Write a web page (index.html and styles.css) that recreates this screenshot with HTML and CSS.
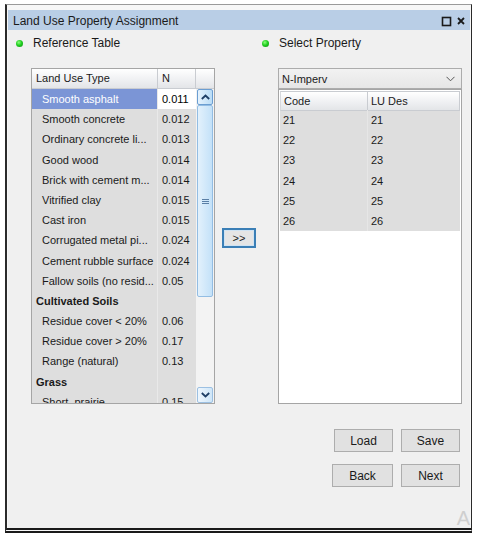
FILE: index.html
```html
<!DOCTYPE html>
<html>
<head>
<meta charset="utf-8">
<link rel="stylesheet" href="styles.css">
</head>
<body>
<div class="window">
  <div class="titlebar">
    <span class="title">Land Use Property Assignment</span>
    <span class="ctrls">
      <svg width="28" height="12" viewBox="0 0 28 12">
        <rect x="1.5" y="2.5" width="8" height="8" fill="none" stroke="#1a1a1a" stroke-width="1.6"/>
        <path d="M17 3 L23 9 M23 3 L17 9" stroke="#1a1a1a" stroke-width="1.8"/>
      </svg>
    </span>
  </div>
  <div class="content">
    <div class="labels">
      <div class="label label-left"><span class="dot"></span>Reference Table</div>
      <div class="label"><span class="dot"></span>Select Property</div>
    </div>
    <div class="panels">
      <div class="ref-table">
        <div class="ref-head">
          <div class="hc hc-name">Land Use Type</div>
          <div class="hc hc-n">N</div>
          <div class="hc hc-sb"></div>
        </div>
        <div class="ref-body">
          <div class="rows">
            <div class="row selected"><div class="c-name">Smooth asphalt</div><div class="c-n">0.011</div></div>
            <div class="row"><div class="c-name">Smooth concrete</div><div class="c-n">0.012</div></div>
            <div class="row"><div class="c-name">Ordinary concrete li...</div><div class="c-n">0.013</div></div>
            <div class="row"><div class="c-name">Good wood</div><div class="c-n">0.014</div></div>
            <div class="row"><div class="c-name">Brick with cement m...</div><div class="c-n">0.014</div></div>
            <div class="row"><div class="c-name">Vitrified clay</div><div class="c-n">0.015</div></div>
            <div class="row"><div class="c-name">Cast iron</div><div class="c-n">0.015</div></div>
            <div class="row"><div class="c-name">Corrugated metal pi...</div><div class="c-n">0.024</div></div>
            <div class="row"><div class="c-name">Cement rubble surface</div><div class="c-n">0.024</div></div>
            <div class="row"><div class="c-name">Fallow soils (no resid...</div><div class="c-n">0.05</div></div>
            <div class="row group"><div class="c-name">Cultivated Soils</div><div class="c-n"></div></div>
            <div class="row"><div class="c-name">Residue cover &lt; 20%</div><div class="c-n">0.06</div></div>
            <div class="row"><div class="c-name">Residue cover &gt; 20%</div><div class="c-n">0.17</div></div>
            <div class="row"><div class="c-name">Range (natural)</div><div class="c-n">0.13</div></div>
            <div class="row group"><div class="c-name">Grass</div><div class="c-n"></div></div>
            <div class="row"><div class="c-name">Short, prairie</div><div class="c-n">0.15</div></div>
          </div>
          <div class="scrollbar">
            <div class="sb-btn sb-up">
              <svg width="9" height="6" viewBox="0 0 9 6"><path d="M0.8 5 L4.5 1.5 L8.2 5" fill="none" stroke="#1f3f66" stroke-width="1.8"/></svg>
            </div>
            <div class="sb-thumb">
              <svg width="7" height="5" viewBox="0 0 7 5"><path d="M0 0.5 H7 M0 2.5 H7 M0 4.5 H7" stroke="#5a7fa6" stroke-width="1"/></svg>
            </div>
            <div class="sb-track"></div>
            <div class="sb-btn sb-down">
              <svg width="9" height="6" viewBox="0 0 9 6"><path d="M0.8 1 L4.5 4.5 L8.2 1" fill="none" stroke="#1f3f66" stroke-width="1.8"/></svg>
            </div>
          </div>
        </div>
      </div>
      <div class="mid">
        <button class="move">&gt;&gt;</button>
      </div>
      <div class="right">
        <div class="select">
          <span>N-Imperv</span>
          <svg width="9" height="6" viewBox="0 0 9 6"><path d="M0.5 0.8 L4.5 4.8 L8.5 0.8" fill="none" stroke="#555" stroke-width="1"/></svg>
        </div>
        <div class="prop-table">
          <div class="prop-head">
            <div class="ph">Code</div>
            <div class="ph">LU Des</div>
          </div>
          <div class="prow"><div>21</div><div>21</div></div>
          <div class="prow"><div>22</div><div>22</div></div>
          <div class="prow"><div>23</div><div>23</div></div>
          <div class="prow"><div>24</div><div>24</div></div>
          <div class="prow"><div>25</div><div>25</div></div>
          <div class="prow"><div>26</div><div>26</div></div>
        </div>
      </div>
    </div>
    <div class="actions">
      <div class="btn-row">
        <button class="btn">Load</button>
        <button class="btn">Save</button>
      </div>
      <div class="btn-row">
        <button class="btn btn-wide">Back</button>
        <button class="btn">Next</button>
      </div>
    </div>
    <span class="watermark">A</span>
  </div>
</div>
</body>
</html>
```

FILE: styles.css
```css
* { box-sizing: border-box; }

body {
  margin: 0;
  background: #ffffff;
  font-family: "Liberation Sans", Arial, sans-serif;
  color: #1a1a1a;
}

.window {
  margin: 4px 0 0 5px;
  width: 467px;
  background: #f7f7f7;
  border-top: 1px solid #9a9a9a;
  border-left: 2px solid #2a2a2a;
  border-right: 1px solid #2a2a2a;
  border-bottom: 5px double #1a1a1a;
  padding: 5px 1px 0 1px;
}

.titlebar {
  height: 20px;
  background: #b9cee6;
  display: flex;
  align-items: center;
  justify-content: space-between;
  padding: 1px 1px 0 5px;
}

.title {
  font-size: 12px;
  color: #1a1a1a;
}

.ctrls svg { display: block; }

.content {
  position: relative;
  height: 498px;
  background: #f0f0f0;
}

.labels {
  display: flex;
  padding: 5px 0 0 8px;
  height: 21px;
}

.label {
  display: flex;
  align-items: center;
  font-size: 12px;
  line-height: 16px;
  color: #1a1a1a;
}

.label-left { width: 246px; }

.dot {
  width: 7px;
  height: 7px;
  border-radius: 50%;
  background: radial-gradient(circle at 40% 35%, #8cff7a 0%, #22d022 45%, #0b8a0b 100%);
  margin-right: 10px;
}

.panels {
  display: flex;
  margin-top: 17px;
  padding-left: 23px;
}

/* Reference table */
.ref-table {
  width: 184px;
  height: 336px;
  border: 1px solid #a5a5a5;
  background: #ffffff;
  font-size: 11px;
  overflow: hidden;
}

.ref-head {
  display: flex;
  height: 20px;
}

.hc {
  height: 20px;
  line-height: 19px;
  background: linear-gradient(#ffffff, #f1f2f4 50%, #e3e5e8);
  border-right: 1px solid #c9ccd1;
  border-bottom: 1px solid #c9ccd1;
  padding-left: 4px;
  color: #1a1a1a;
}

.hc-name { width: 126px; }
.hc-n { width: 38px; }
.hc-sb { width: 18px; border-right: none; }

.ref-body {
  display: flex;
  height: 314px;
}

.rows {
  width: 164px;
  overflow: hidden;
}

.row {
  display: grid;
  grid-template-columns: 126px 38px;
  height: 20.2px;
  line-height: 20px;
  white-space: nowrap;
}

.c-name, .c-n {
  background: #dedede;
  overflow: hidden;
}

.c-name {
  padding-left: 10px;
  border-right: 1px solid #e9e9e9;
}

.c-n { padding-left: 4px; }

.row.group .c-name {
  padding-left: 4px;
  font-weight: bold;
}

.row.selected .c-name {
  background: #7b95d6;
  color: #ffffff;
}

.row.selected .c-n {
  background: #ffffff;
  color: #000000;
}

.scrollbar {
  width: 18px;
  display: flex;
  flex-direction: column;
  padding: 0 1px;
  background: #f3f3f3;
}

.sb-btn {
  height: 16px;
  flex: none;
  display: flex;
  align-items: center;
  justify-content: center;
  border: 1px solid #6b9ed2;
  border-radius: 2px;
  background: linear-gradient(to right, #e6f3fd, #b9dcf6);
}

.sb-btn svg { display: block; }

.sb-thumb {
  height: 192px;
  flex: none;
  display: flex;
  align-items: center;
  justify-content: center;
  border: 1px solid #93bde3;
  border-radius: 2px;
  background: linear-gradient(to right, #e3f1fc, #c3e1f8);
}

.sb-thumb svg { display: block; }

.sb-track { flex: 1; }

.sb-down {
  border-color: #9cc0e2;
  background: linear-gradient(to right, #eef6fd, #cfe6f8);
}

/* Middle */
.mid {
  width: 63px;
  padding-left: 7px;
  padding-top: 160px;
}

.move {
  width: 34px;
  height: 20px;
  border: 2px solid #3b7fb6;
  background: #e5e5e5;
  font-family: "Liberation Sans", Arial, sans-serif;
  font-size: 11px;
  color: #1a1a1a;
  padding: 0;
  box-shadow: inset 0 0 0 1px #cfe3f3;
}

/* Right side */
.right {
  width: 184px;
  display: flex;
  flex-direction: column;
  font-size: 11px;
}

.select {
  height: 21px;
  border: 1px solid #acacac;
  background: linear-gradient(#f2f2f2, #e6e6e6);
  display: flex;
  align-items: center;
  justify-content: space-between;
  padding: 0 6px 0 3px;
  color: #1a1a1a;
}

.select svg { display: block; }

.prop-table {
  height: 315px;
  border: 1px solid #a5a5a5;
  background: #ffffff;
  padding: 1px;
}

.prop-head {
  display: grid;
  grid-template-columns: 88px 92px;
  height: 19px;
}

.ph {
  line-height: 18px;
  padding-left: 3px;
  background: linear-gradient(#ffffff, #f1f2f4 50%, #e3e5e8);
  border: 1px solid #c9ccd1;
  border-left: none;
}

.ph:first-child { border-left: 1px solid #d6d8dc; }

.prow {
  display: grid;
  grid-template-columns: 88px 92px;
  height: 20.2px;
  line-height: 20px;
  background: #dedede;
}

.prow div { padding-left: 3px; }
.prow div:first-child { border-right: 1px solid #e6e6e6; }

/* Buttons */
.actions {
  display: flex;
  flex-direction: column;
  align-items: flex-end;
  gap: 12px;
  margin-top: 25px;
  padding-right: 10px;
}

.btn-row {
  display: flex;
  gap: 8px;
}

.btn {
  width: 59px;
  height: 23px;
  border: 1px solid #adadad;
  background: #e1e1e1;
  font-family: "Liberation Sans", Arial, sans-serif;
  font-size: 12px;
  color: #1a1a1a;
  padding: 0;
}

.btn-wide { width: 61px; }

.watermark {
  position: absolute;
  right: 0;
  bottom: 0;
  font-family: "Liberation Sans", Arial, sans-serif;
  font-size: 20px;
  color: #cfcfcf;
  line-height: 20px;
}
```
